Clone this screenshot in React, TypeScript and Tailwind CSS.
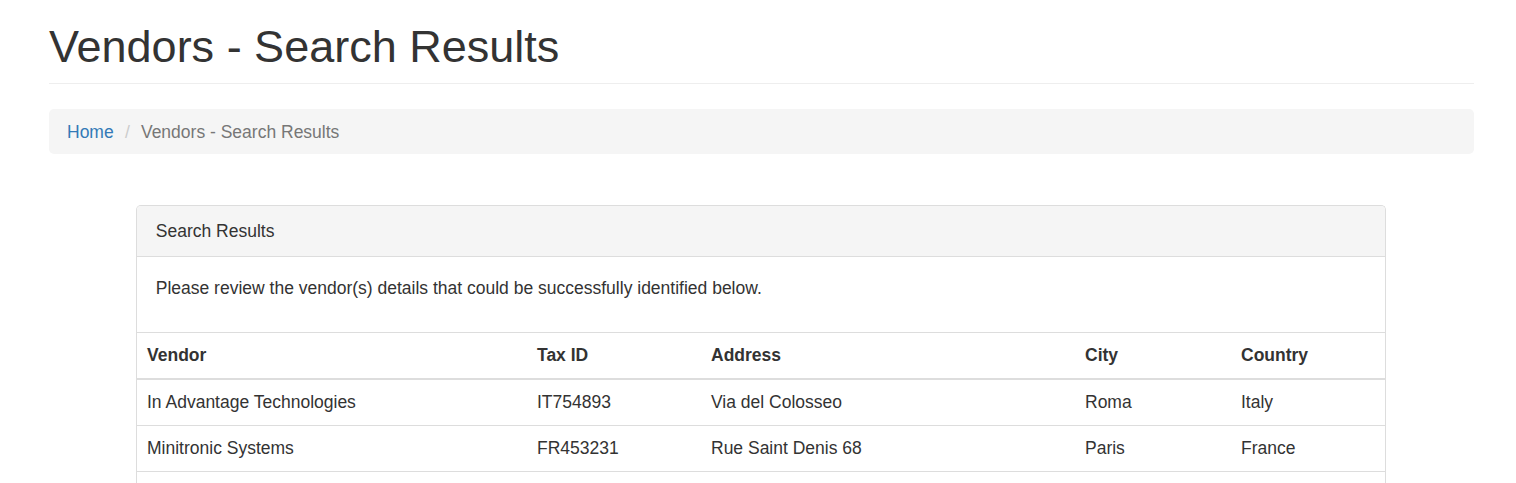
const vendors = [
  { name: 'In Advantage Technologies', taxId: 'IT754893', address: 'Via del Colosseo', city: 'Roma', country: 'Italy' },
  { name: 'Minitronic Systems', taxId: 'FR453231', address: 'Rue Saint Denis 68', city: 'Paris', country: 'France' },
];

const cols = [
  { label: 'Vendor', w: 'w-[390px]' },
  { label: 'Tax ID', w: 'w-[174px]' },
  { label: 'Address', w: 'w-[374px]' },
  { label: 'City', w: 'w-[156px]' },
  { label: 'Country', w: 'w-[154px]' },
];

export default function App() {
  return (
    <div className="min-h-screen bg-white font-['Liberation_Sans',Arial,sans-serif] text-[17.5px] leading-[25px] text-[#333]">
      <div className="ml-[49px] w-[1425px]">
        <div className="border-b border-[#eee] pt-[22px] pb-[11px]">
          <h1 className="text-[45px] leading-[50px] font-normal">Vendors - Search Results</h1>
        </div>

        <ol className="mt-[25px] flex h-[45px] rounded-[5px] bg-[#f5f5f5] px-[18px] pt-[11px]">
          <li>
            <a href="#" className="text-[#337ab7]">Home</a>
          </li>
          <li className="ml-[5px] text-[#777]">
            <span className="px-[6.25px] text-[#ccc]">/&nbsp;</span>
            Vendors - Search Results
          </li>
        </ol>

        <div className="mt-[51px] ml-[87px] w-[1250px] rounded-t-[5px] border-x border-t border-[#ddd]">
          <div className="h-[51px] rounded-t-[4px] border-b border-[#ddd] bg-[#f5f5f5] px-[18.75px] py-[12.5px]">
            Search Results
          </div>
          <div className="px-[18.75px] pt-[18.75px] pb-[18.75px]">
            <p className="mb-[12.5px]">Please review the vendor(s) details that could be successfully identified below.</p>
          </div>
          <table className="w-full table-fixed border-collapse border-t border-[#ddd] text-left">
            <thead>
              <tr>
                {cols.map((c) => (
                  <th key={c.label} className={`${c.w} border-b-2 border-[#ddd] px-[10px] py-[10px] font-bold`}>
                    {c.label}
                  </th>
                ))}
              </tr>
            </thead>
            <tbody>
              {vendors.map((v, i) => (
                <tr key={v.taxId}>
                  {[v.name, v.taxId, v.address, v.city, v.country].map((val, j) => (
                    <td
                      key={j}
                      className={`${i === 0 ? '' : 'border-t border-[#ddd]'} px-[10px] py-[10px]`}
                    >
                      {val}
                    </td>
                  ))}
                </tr>
              ))}
              <tr>
                <td colSpan={5} className="h-[20px] border-t border-[#ddd]"></td>
              </tr>
            </tbody>
          </table>
        </div>
      </div>
    </div>
  );
}
